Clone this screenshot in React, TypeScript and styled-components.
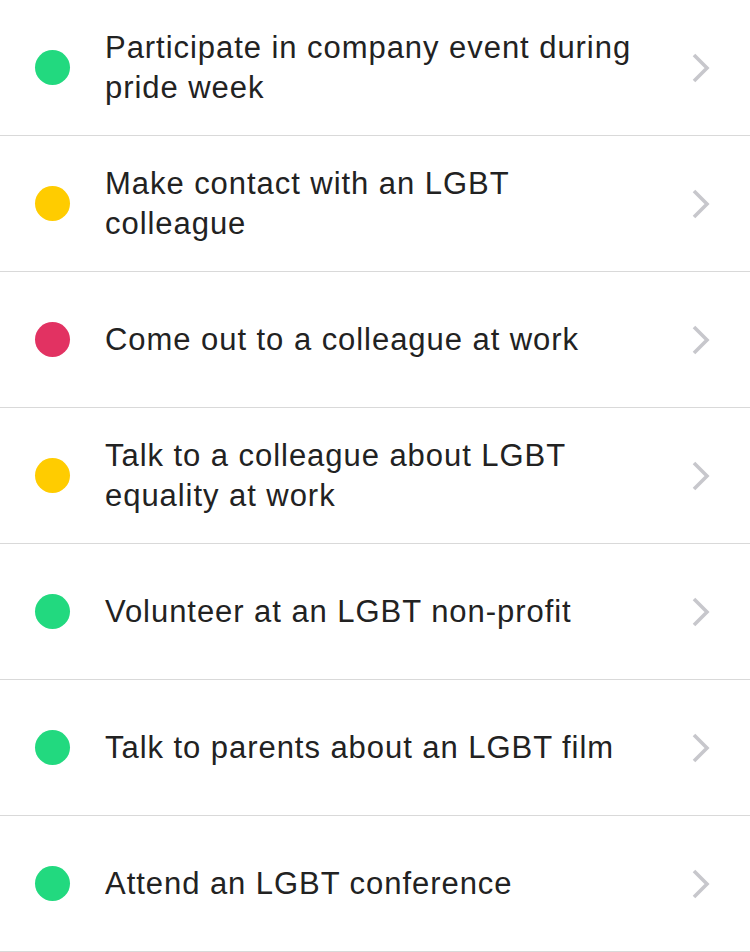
import React from "react";
import styled, { createGlobalStyle } from "styled-components";

const Global = createGlobalStyle`
  html, body { margin: 0; padding: 0; background: #ffffff; }
  body { font-family: "Liberation Sans", Arial, sans-serif; -webkit-font-smoothing: antialiased; }
`;

const List = styled.ul`
  list-style: none;
  margin: 0;
  padding: 0;
  width: 750px;
`;

const Row = styled.li`
  display: flex;
  align-items: center;
  height: 135px;
  border-bottom: 1px solid #d9d9d9;
  padding: 0 40px 0 35px;
`;

const Dot = styled.span<{ $color: string }>`
  flex: none;
  width: 35px;
  height: 35px;
  border-radius: 50%;
  background: ${(p) => p.$color};
  margin-right: 35px;
`;

const Label = styled.span`
  flex: 1;
  font-size: 31px;
  line-height: 40px;
  letter-spacing: 0.95px;
  color: #222222;
  padding-right: 47px;
`;

const Chevron = styled.svg`
  flex: none;
  width: 18px;
  height: 30px;
`;

const COLORS = { green: "#22d97f", yellow: "#ffcc00", red: "#e23262" };

const items: { text: string; color: string }[] = [
  { text: "Participate in company event during pride week", color: COLORS.green },
  { text: "Make contact with an LGBT colleague", color: COLORS.yellow },
  { text: "Come out to a colleague at work", color: COLORS.red },
  { text: "Talk to a colleague about LGBT equality at work", color: COLORS.yellow },
  { text: "Volunteer at an LGBT non-profit", color: COLORS.green },
  { text: "Talk to parents about an LGBT film", color: COLORS.green },
  { text: "Attend an LGBT conference", color: COLORS.green },
];

export default function App() {
  return (
    <>
      <Global />
      <List>
        {items.map((it) => (
          <Row key={it.text}>
            <Dot $color={it.color} />
            <Label>{it.text}</Label>
            <Chevron viewBox="0 0 18 30">
              <path d="M2 2 L15 15 L2 28" fill="none" stroke="#c7c7cc" strokeWidth="3.6" />
            </Chevron>
          </Row>
        ))}
      </List>
    </>
  );
}
